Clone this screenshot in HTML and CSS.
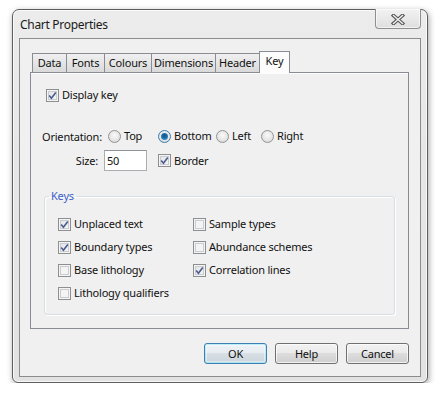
FILE: index.html
```html
<!DOCTYPE html>
<html>
<head>
<meta charset="utf-8">
<link rel="stylesheet" href="styles.css">
</head>
<body>
<div class="window">
  <div class="titlebar">
    <span class="title">Chart Properties</span>
    <div class="close">
      <svg width="14" height="11" viewBox="0 0 14 11">
        <path d="M2.5 1.5 L11.5 9.5 M11.5 1.5 L2.5 9.5" stroke="#555" stroke-width="3.6" stroke-linecap="square" fill="none"/>
        <path d="M2.5 1.5 L11.5 9.5 M11.5 1.5 L2.5 9.5" stroke="#f4f4f4" stroke-width="1.4" stroke-linecap="square" fill="none"/>
      </svg>
    </div>
  </div>
  <div class="client">
    <div class="tabs">
      <div class="tab t-data">Data</div>
      <div class="tab t-fonts">Fonts</div>
      <div class="tab t-colours">Colours</div>
      <div class="tab t-dim">Dimensions</div>
      <div class="tab t-header">Header</div>
      <div class="tab t-key sel">Key</div>
    </div>
    <div class="panel">
      <div class="row r-display">
        <span class="box checked"><svg width="9" height="9" viewBox="0 0 9 9"><path d="M1.2 4.6 L3.4 7.2 L7.8 1.4" stroke="#4b5b8c" stroke-width="1.6" fill="none"/></svg></span>
        <span class="txt">Display key</span>
      </div>
      <div class="row r-orient">
        <span class="lbl">Orientation:</span>
        <span class="opt o-top"><span class="radio"></span><span class="txt">Top</span></span>
        <span class="opt o-bottom"><span class="radio on"><span class="dot"></span></span><span class="txt">Bottom</span></span>
        <span class="opt o-left"><span class="radio"></span><span class="txt">Left</span></span>
        <span class="opt o-right"><span class="radio"></span><span class="txt">Right</span></span>
      </div>
      <div class="row r-size">
        <span class="lbl">Size:</span>
        <span class="input">50</span>
        <span class="opt o-border">
          <span class="box checked"><svg width="9" height="9" viewBox="0 0 9 9"><path d="M1.2 4.6 L3.4 7.2 L7.8 1.4" stroke="#4b5b8c" stroke-width="1.6" fill="none"/></svg></span>
          <span class="txt">Border</span>
        </span>
      </div>
      <fieldset class="keys">
        <legend>Keys</legend>
        <div class="grid">
          <div class="item"><span class="box checked"><svg width="9" height="9" viewBox="0 0 9 9"><path d="M1.2 4.6 L3.4 7.2 L7.8 1.4" stroke="#4b5b8c" stroke-width="1.6" fill="none"/></svg></span><span class="txt">Unplaced text</span></div>
          <div class="item"><span class="box"></span><span class="txt">Sample types</span></div>
          <div class="item"><span class="box checked"><svg width="9" height="9" viewBox="0 0 9 9"><path d="M1.2 4.6 L3.4 7.2 L7.8 1.4" stroke="#4b5b8c" stroke-width="1.6" fill="none"/></svg></span><span class="txt">Boundary types</span></div>
          <div class="item"><span class="box"></span><span class="txt">Abundance schemes</span></div>
          <div class="item"><span class="box"></span><span class="txt">Base lithology</span></div>
          <div class="item"><span class="box checked"><svg width="9" height="9" viewBox="0 0 9 9"><path d="M1.2 4.6 L3.4 7.2 L7.8 1.4" stroke="#4b5b8c" stroke-width="1.6" fill="none"/></svg></span><span class="txt">Correlation lines</span></div>
          <div class="item"><span class="box"></span><span class="txt">Lithology qualifiers</span></div>
        </div>
      </fieldset>
    </div>
    <div class="buttons">
      <div class="btn default">OK</div>
      <div class="btn">Help</div>
      <div class="btn">Cancel</div>
    </div>
  </div>
</div>
</body>
</html>
```
FILE: styles.css
```css
* { box-sizing: border-box; }
body {
  margin: 0;
  background: #ffffff;
  font-family: "Noto Sans", "DejaVu Sans", sans-serif;
  font-size: 11px;
  letter-spacing: -0.2px;
  color: #111;
}
.window {
  margin: 9px 0 0 12px;
  width: 416px;
  height: 374px;
  border: 1px solid #5e5e5e;
  border-radius: 7px 7px 6px 6px;
  background: linear-gradient(#ececec, #e6e6e6 40%, #e2e2e2);
  box-shadow: 1px 2px 6px rgba(0,0,0,0.35), inset 0 0 0 1px rgba(255,255,255,0.75);
  padding: 0 6px 5px 6px;
  display: flex;
  flex-direction: column;
}
.titlebar {
  height: 28px;
  display: flex;
  justify-content: space-between;
  align-items: flex-start;
  flex: none;
}
.title {
  padding: 7px 0 0 1px;
  line-height: 16px;
  font-size: 12px;
  letter-spacing: -0.3px;
  color: #1a1a1a;
}
.close {
  margin-top: -1px;
  width: 46px;
  height: 20px;
  border: 1px solid #8e8e8e;
  border-top: none;
  border-radius: 0 0 4px 4px;
  background: linear-gradient(#f2f2f2, #e9e9e9 50%, #dedede);
  box-shadow: inset 0 0 0 1px rgba(255,255,255,0.6);
  display: flex;
  align-items: center;
  justify-content: center;
  padding-top: 1px;
}
.client {
  flex: none;
  height: 339px;
  border: 1px solid #8c8c8c;
  background: #f0f0f0;
  padding: 12px 11px 0 10px;
}
.tabs {
  display: flex;
  align-items: flex-end;
  padding-left: 2px;
  height: 21px;
  position: relative;
  z-index: 1;
}
.tab {
  height: 19px;
  border: 1px solid #898c95;
  border-bottom: none;
  margin-left: -1px;
  background: linear-gradient(#f0f0f0, #e5e5e5 50%, #d9d9d9);
  display: flex;
  align-items: center;
  justify-content: center;
  line-height: 14px;
  padding-bottom: 1px;
}
.t-data { margin-left: 0; width: 35px; }
.t-fonts { width: 39px; }
.t-colours { width: 48px; }
.t-dim { width: 65px; }
.t-header { width: 45px; }
.t-key { width: 31px; }
.tab.sel {
  height: 22px;
  background: #fcfcfc;
  margin-bottom: -1px;
  padding-bottom: 3px;
}
.panel {
  height: 257px;
  border: 1px solid #898c95;
  background: #f0f0f0;
  box-shadow: inset 0 1px 0 #fcfcfc;
  padding: 14px 0 0 0;
}
.row {
  display: flex;
  align-items: center;
  height: 16px;
}
.r-display { padding-left: 15px; }
.r-orient { margin-top: 25px; }
.r-size { margin-top: 6px; height: 21px; }
.lbl {
  width: 56px;
  margin-left: 11px;
  text-align: right;
  flex: none;
}
.r-orient .lbl { margin-right: 10px; }
.r-size .lbl { margin-right: 6px; }
.opt {
  display: flex;
  align-items: center;
  flex: none;
}
.o-top { width: 50px; }
.o-bottom { width: 58px; }
.o-left { width: 45px; }
.o-border { margin-left: 11px; }
.txt { margin-left: 3px; line-height: 16px; white-space: nowrap; }
.box {
  width: 13px;
  height: 13px;
  flex: none;
  border: 1px solid #8e8f8f;
  background: #f4f4f4;
  box-shadow: inset 0 0 0 1px #f4f4f4, inset 0 0 0 2px #c9ccd1;
  display: flex;
  align-items: center;
  justify-content: center;
}
.box.checked {
  background: linear-gradient(135deg, #dfe2e7, #f7f7f7);
}
.radio {
  width: 13px;
  height: 13px;
  flex: none;
  border-radius: 50%;
  border: 1px solid #939393;
  background: radial-gradient(circle at 50% 40%, #fafafa 0%, #e6e6e6 55%, #cfcfcf 100%);
  display: flex;
  align-items: center;
  justify-content: center;
}
.radio.on { border-color: #3d7bad; }
.dot {
  width: 7px;
  height: 7px;
  border-radius: 50%;
  background: radial-gradient(circle at 50% 40%, #1a4f7f 0%, #1e6ea8 45%, #56b2e6 100%);
}
.input {
  width: 43px;
  height: 21px;
  border: 1px solid #abadb3;
  border-top-color: #8e939b;
  background: #fff;
  padding-left: 2px;
  line-height: 19px;
  flex: none;
}
.keys {
  margin: 18px 13px 0 13px;
  border: 1px solid #d5dfe5;
  border-radius: 3px;
  box-shadow: inset 1px 1px 0 #fff, 1px 1px 0 #fff;
  padding: 13px 0 13px 0;
  min-width: 0;
}
.keys legend {
  color: #3b5fc6;
  margin-left: 4px;
  padding: 0 2px;
  line-height: 14px;
}
.grid {
  display: grid;
  grid-template-columns: 135px 1fr;
  row-gap: 7px;
  padding-left: 13px;
}
.item {
  display: flex;
  align-items: center;
  height: 16px;
}
.buttons {
  display: flex;
  justify-content: flex-end;
  gap: 8px;
  margin-top: 14px;
}
.btn {
  width: 63px;
  height: 21px;
  border: 1px solid #707070;
  border-radius: 3px;
  background: linear-gradient(#f2f2f2, #ebebeb 45%, #dddddd 50%, #cfcfcf);
  box-shadow: inset 0 0 0 1px rgba(255,255,255,0.7);
  display: flex;
  align-items: center;
  justify-content: center;
  padding-bottom: 1px;
}
.btn.default {
  border-color: #3c7fb1;
  box-shadow: inset 0 0 0 1px #48dbfb55, inset 0 0 0 2px rgba(255,255,255,0.4);
  background: linear-gradient(#eef3f7, #e6ecf1 45%, #d8dfe5 50%, #cbd4dc);
}
```
